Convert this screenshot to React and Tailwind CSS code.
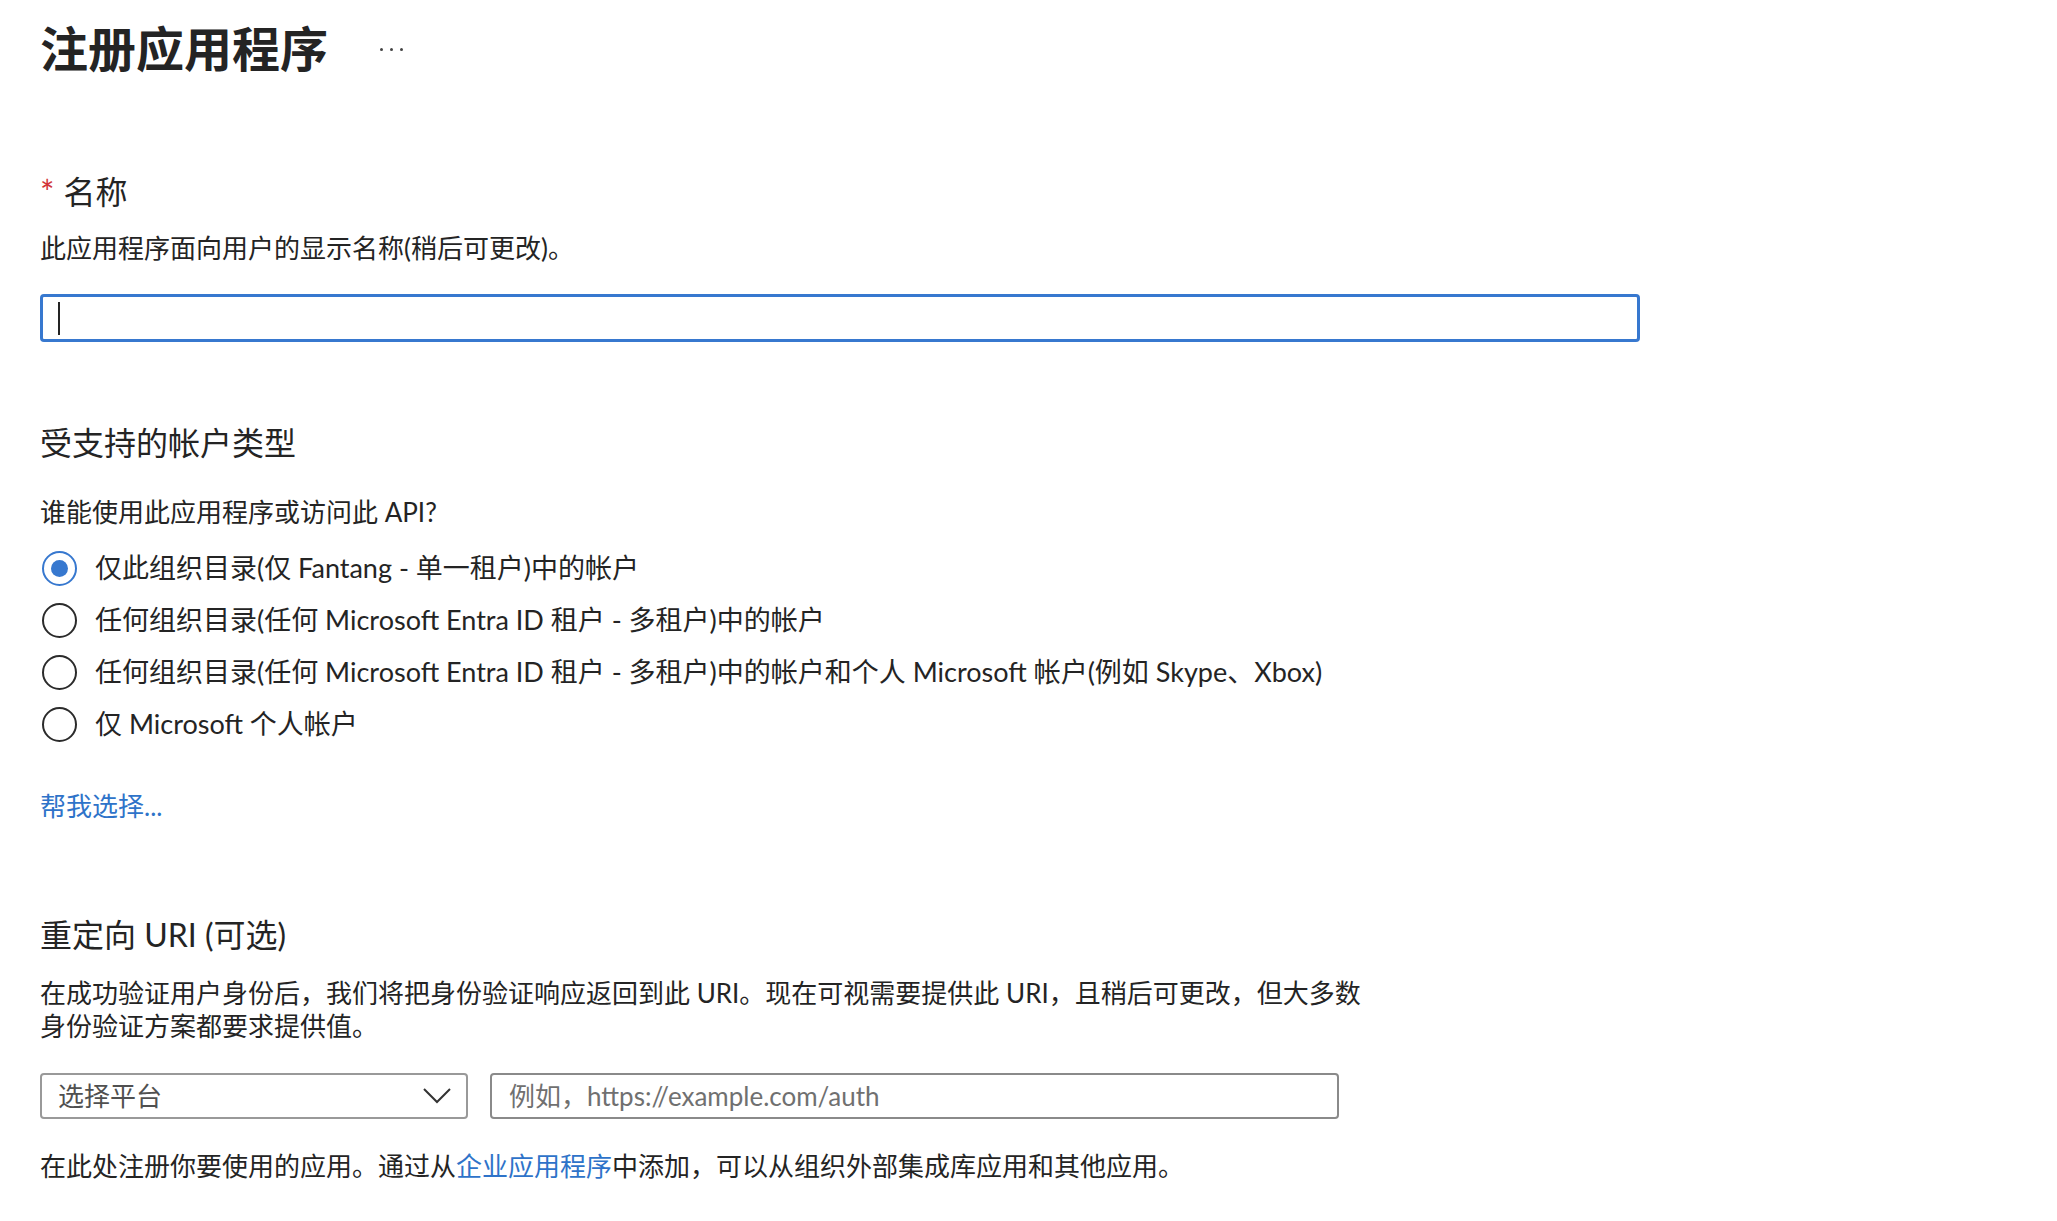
import React from "react";

const FONT = { fontFamily: '"Lato", "Noto Sans CJK SC", sans-serif' };

function Radio({ checked, label }) {
  return (
    <div className="flex h-[52px] items-center pl-[2px]">
      <div
        className={
          "flex h-[35px] w-[35px] shrink-0 items-center justify-center rounded-full border-2 " +
          (checked ? "border-[#3778cf]" : "border-[#2b2b2b]")
        }
      >
        {checked && <div className="h-[17px] w-[17px] rounded-full bg-[#3778cf]" />}
      </div>
      <span className="ml-[18px] text-[27px] leading-[36px] text-[#242424]">{label}</span>
    </div>
  );
}

export default function App() {
  return (
    <div className="min-h-[1221px] w-full bg-white pl-[40px] text-[#242424]" style={FONT}>
      {/* Title */}
      <div className="flex h-[81px] items-center pt-[17px]">
        <h1 className="text-[48px] font-bold leading-[64px] text-[#242424]">注册应用程序</h1>
        <div className="ml-[52px] flex items-center gap-[7px]">
          <div className="h-[3px] w-[3px] rounded-full bg-[#444]" />
          <div className="h-[3px] w-[3px] rounded-full bg-[#444]" />
          <div className="h-[3px] w-[3px] rounded-full bg-[#444]" />
        </div>
      </div>

      {/* Name */}
      <div className="mt-[89px] flex items-center text-[32px] leading-[44px]">
        <span className="mr-[9px] text-[34px] leading-[30px] text-[#d13438]">*</span>
        <span>名称</span>
      </div>
      <p className="mt-[16px] text-[26px] leading-[36px]">此应用程序面向用户的显示名称(稍后可更改)。</p>
      <div className="mt-[28px] flex h-[48px] w-[1600px] items-center rounded-[4px] border-[3px] border-[#3778cf] pl-[15px]">
        <div className="h-[33px] w-[2px] bg-[#242424]" />
      </div>

      {/* Account types */}
      <h2 className="mt-[79px] text-[32px] leading-[44px]">受支持的帐户类型</h2>
      <p className="mt-[29px] text-[26px] leading-[36px]">谁能使用此应用程序或访问此 API?</p>
      <div className="mt-[12px] flex flex-col">
        <Radio checked label="仅此组织目录(仅 Fantang - 单一租户)中的帐户" />
        <Radio label="任何组织目录(任何 Microsoft Entra ID 租户 - 多租户)中的帐户" />
        <Radio label="任何组织目录(任何 Microsoft Entra ID 租户 - 多租户)中的帐户和个人 Microsoft 帐户(例如 Skype、Xbox)" />
        <Radio label="仅 Microsoft 个人帐户" />
      </div>
      <a className="mt-[38px] block text-[26px] leading-[36px] text-[#2e73c9]" href="#">帮我选择...</a>

      {/* Redirect URI */}
      <h2 className="mt-[89px] text-[32px] leading-[44px]">重定向 URI (可选)</h2>
      <p className="mt-[20px] max-w-[1345px] text-[26px] leading-[33px]">
        在成功验证用户身份后，我们将把身份验证响应返回到此 URI。现在可视需要提供此 URI，且稍后可更改，但大多数身份验证方案都要求提供值。
      </p>
      <div className="mt-[30px] flex gap-[22px]">
        <div className="flex h-[46px] w-[428px] items-center justify-between rounded-[4px] border-2 border-[#999] pl-[16px] pr-[14px]">
          <span className="text-[26px] leading-[36px] text-[#505050]">选择平台</span>
          <svg width="30" height="18" viewBox="0 0 30 18" fill="none">
            <path d="M2 2 L15 15 L28 2" stroke="#333" strokeWidth="2" />
          </svg>
        </div>
        <div className="flex h-[46px] w-[849px] items-center rounded-[4px] border-2 border-[#8a8a8a] pl-[17px]">
          <span className="text-[26px] leading-[36px] text-[#707070]">例如，https://example.com/auth</span>
        </div>
      </div>
      <p className="mt-[29px] text-[26px] leading-[36px]">
        在此处注册你要使用的应用。通过从<a href="#" className="text-[#2e73c9]">企业应用程序</a>中添加，可以从组织外部集成库应用和其他应用。
      </p>
    </div>
  );
}
